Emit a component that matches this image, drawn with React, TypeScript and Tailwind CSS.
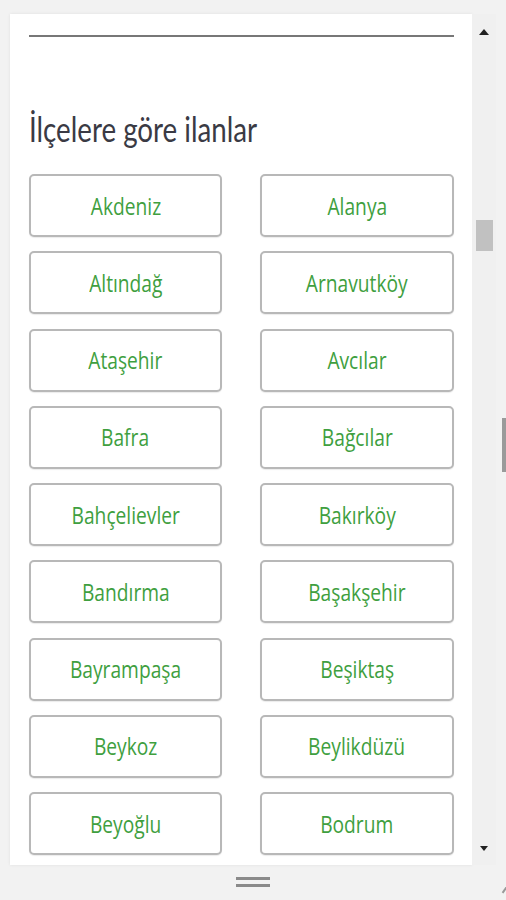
import React from "react";

const items = [
  "Akdeniz", "Alanya",
  "Altındağ", "Arnavutköy",
  "Ataşehir", "Avcılar",
  "Bafra", "Bağcılar",
  "Bahçelievler", "Bakırköy",
  "Bandırma", "Başakşehir",
  "Bayrampaşa", "Beşiktaş",
  "Beykoz", "Beylikdüzü",
  "Beyoğlu", "Bodrum",
];

export default function App() {
  return (
    <div className="relative w-[506px] h-[900px] bg-[#f2f2f2] overflow-hidden flex flex-col">
      <div className="h-[14px] shrink-0" />
      <div className="flex ml-[10px] h-[851px] shrink-0">
        <div className="w-[462px] h-full bg-white overflow-hidden pl-[19px] pr-[18px] shadow-[0_0_3px_rgba(0,0,0,0.08)]">
          <div className="mt-[21px] h-[2px] bg-[#777]" />
          <h2
            className="mt-[70px] h-[44px] leading-[44px] text-[34px] font-normal text-[#3a3a44] origin-left scale-x-[0.815] whitespace-nowrap"
            style={{ fontFamily: "Lato, 'Noto Sans', sans-serif" }}
          >
            İlçelere göre ilanlar
          </h2>
          <div className="mt-[23px] grid grid-cols-[193px_194px] gap-x-[38px] gap-y-[14.25px]">
            {items.map((t) => (
              <div
                key={t}
                className="h-[63px] rounded-[5px] border-2 border-[#b8b8b8] bg-white flex items-center justify-center shadow-[0_1px_1px_rgba(0,0,0,0.08)]"
              >
                <span
                  className="inline-block text-[24px] text-[#3f9f3f] scale-x-[0.8] whitespace-nowrap"
                  style={{ fontFamily: "'Open Sans', sans-serif" }}
                >
                  {t}
                </span>
              </div>
            ))}
          </div>
        </div>
        <div className="w-[24px] h-full bg-[#f0f0f0] flex flex-col items-center">
          <div className="mt-[15px] ml-[0px] w-0 h-0 border-l-[5px] border-r-[5px] border-b-[6px] border-l-transparent border-r-transparent border-b-[#222]" />
          <div className="mt-[185px] w-[17px] h-[31px] bg-[#c1c1c1]" />
          <div className="flex-1" />
          <div className="mb-[14px] ml-[-1px] w-0 h-0 border-l-[4px] border-r-[4px] border-t-[5px] border-l-transparent border-r-transparent border-t-[#222]" />
        </div>
      </div>
      <div className="flex-1 relative flex items-center justify-center">
        <div className="flex flex-col gap-[4px] -mt-[2px]">
          <div className="w-[34px] h-[3px] bg-[#8a8a8a]" />
          <div className="w-[34px] h-[3px] bg-[#8a8a8a]" />
        </div>
      </div>
      <div className="absolute right-0 top-[418px] w-[4px] h-[54px] bg-[#9a9a9a]" />
      <div className="absolute right-[-1px] bottom-[6px] w-[2px] h-[12px] bg-[#999] rotate-[35deg]" />
    </div>
  );
}
